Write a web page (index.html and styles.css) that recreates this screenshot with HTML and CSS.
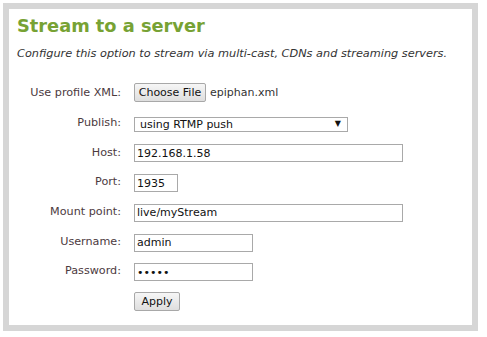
FILE: index.html
```html
<!DOCTYPE html>
<html lang="en">
<head>
  <meta charset="UTF-8" />
  <title>Stream to a server</title>
  <link rel="stylesheet" href="styles.css">
</head>
<body>
  <div class="panel">
    <h1>Stream to a server</h1>
    <p class="intro">Configure this option to stream via multi-cast, CDNs and streaming servers.</p>

    <div class="form">
      <label>Use profile XML:</label>
      <div class="file-field">
        <button class="btn file-btn" type="button">Choose File</button>
        <span class="file-name">epiphan.xml</span>
      </div>

      <label>Publish:</label>
      <div class="select-wrap">
        <select>
          <option>using RTMP push</option>
        </select>
      </div>

      <label>Host:</label>
      <div><input type="text" class="wide" value="192.168.1.58" /></div>

      <label>Port:</label>
      <div><input type="text" class="tiny" value="1935" /></div>

      <label>Mount point:</label>
      <div><input type="text" class="wide" value="live/myStream" /></div>

      <label>Username:</label>
      <div><input type="text" class="mid" value="admin" /></div>

      <label>Password:</label>
      <div><input type="password" class="mid" value="admin" /></div>

      <span></span>
      <div><button class="btn apply-btn" type="button">Apply</button></div>
    </div>
  </div>
</body>
</html>
```

FILE: styles.css
```css
body {
  margin: 0;
  background: #fff;
  font-family: 'DejaVu Sans', Verdana, sans-serif;
  color: #333;
}

.panel {
  box-sizing: border-box;
  width: 475px;
  height: 328px;
  margin: 3px;
  border: 6px solid #d6d6d6;
  padding: 0 8px;
}

h1 {
  margin: 5px 0 0;
  font-size: 17.8px;
  line-height: 24px;
  color: #77a234;
}

.intro {
  margin: 9px 0 0;
  font-size: 11.3px;
  font-style: italic;
  line-height: 14px;
  color: #333;
}

.form {
  display: grid;
  grid-template-columns: 104px 1fr;
  grid-auto-rows: 29.7px;
  column-gap: 13px;
  align-items: center;
  margin-top: 17px;
}

.form label {
  text-align: right;
  font-size: 11.2px;
  color: #4c3a3e;
}

.file-field {
  display: flex;
  align-items: center;
  gap: 4px;
}

.file-name {
  font-size: 11px;
  color: #333;
}

.btn {
  box-sizing: border-box;
  height: 19px;
  padding: 0;
  white-space: nowrap;
  font-family: 'DejaVu Sans', Verdana, sans-serif;
  font-size: 11px;
  color: #111;
  background: linear-gradient(#f6f6f6, #dedede);
  border: 1px solid #a8a8a8;
  border-radius: 2px;
}

.file-btn {
  width: 72px;
}

.apply-btn {
  width: 46px;
}

input {
  box-sizing: border-box;
  height: 18px;
  padding: 0 2px;
  border: 1px solid #a9a9a9;
  font-family: 'DejaVu Sans', Verdana, sans-serif;
  font-size: 11px;
  color: #111;
  outline: none;
}

.wide {
  width: 269px;
}

.tiny {
  width: 44px;
}

.mid {
  width: 119px;
}

.select-wrap {
  position: relative;
  width: 214px;
}

.select-wrap select {
  box-sizing: border-box;
  width: 214px;
  height: 15px;
  padding: 0 5px;
  border: 1px solid #a9a9a9;
  border-radius: 0;
  background: #fff;
  font-family: 'DejaVu Sans', Verdana, sans-serif;
  font-size: 11px;
  color: #111;
  appearance: none;
  -webkit-appearance: none;
}

.select-wrap::after {
  content: "\25BC";
  position: absolute;
  right: 7px;
  top: 50%;
  transform: translateY(-50%);
  font-size: 8px;
  color: #111;
  pointer-events: none;
}
```
